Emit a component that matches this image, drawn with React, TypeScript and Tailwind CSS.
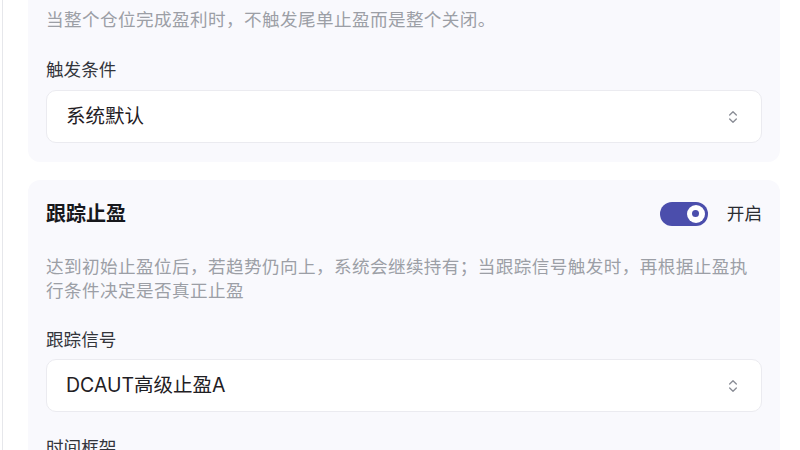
import { ChevronsUpDown } from "lucide-react";

const font = { fontFamily: '"Inter", "Noto Sans CJK SC", sans-serif' };

function SelectBox({ value }: { value: string }) {
  return (
    <div className="flex h-[53px] items-center justify-between rounded-[10px] border border-[#ebebf0] bg-white pl-[19px] pr-[20px]">
      <span className="text-[19.5px] text-[#1f2024]">{value}</span>
      <ChevronsUpDown className="h-[16px] w-[16px] text-[#8a8d96]" strokeWidth={2} />
    </div>
  );
}

function Toggle({ on }: { on: boolean }) {
  return (
    <div
      className={`flex h-[24px] w-[48px] items-center rounded-full px-[3px] ${
        on ? "justify-end bg-[#4b4eac]" : "justify-start bg-gray-300"
      }`}
    >
      <div className="flex h-[18px] w-[18px] items-center justify-center rounded-full bg-white">
        <div className="h-[7px] w-[7px] rounded-full bg-[#4b4eac]" />
      </div>
    </div>
  );
}

export default function App() {
  return (
    <div className="h-[450px] w-[800px] overflow-hidden bg-white pl-[2px]" style={font}>
      <div className="flex h-full flex-col border-l border-[#e6e7eb] pl-[25px] pr-[20px]">
        <div className="-mt-[20px] flex flex-col gap-[18px]">
          {/* 止盈关闭 */}
          <div className="rounded-[12px] bg-[#f9f9fd] px-[18px] pb-[19px] pt-[28px]">
            <p className="text-[17.6px] leading-[24px] tracking-[0.4px] text-[#9c9fa6]">
              当整个仓位完成盈利时，不触发尾单止盈而是整个关闭。
            </p>
            <div className="mt-[26px] mb-[8px] text-[17.6px] leading-[24px] text-[#33353b]">触发条件</div>
            <SelectBox value="系统默认" />
          </div>

          {/* 跟踪止盈 */}
          <div className="rounded-[12px] bg-[#f9f9fd] px-[18px] pb-[20px] pt-[20px]">
            <div className="flex h-[28px] items-center justify-between">
              <h3 className="text-[20px] font-bold leading-[28px] text-[#17181c]">跟踪止盈</h3>
              <div className="flex items-center gap-[19px]">
                <Toggle on />
                <span className="text-[17.6px] text-[#2a2c31]">开启</span>
              </div>
            </div>
            <p className="mt-[27px] text-[17.6px] leading-[24px] tracking-[0.4px] text-[#9c9fa6]">
              达到初始止盈位后，若趋势仍向上，系统会继续持有；当跟踪信号触发时，再根据止盈执行条件决定是否真正止盈
            </p>
            <div className="mt-[25px] mb-[7px] text-[17.6px] leading-[24px] text-[#33353b]">跟踪信号</div>
            <SelectBox value="DCAUT高级止盈A" />
            <div className="mt-[24px] text-[17.6px] leading-[24px] text-[#33353b]">时间框架</div>
          </div>
        </div>
      </div>
    </div>
  );
}
